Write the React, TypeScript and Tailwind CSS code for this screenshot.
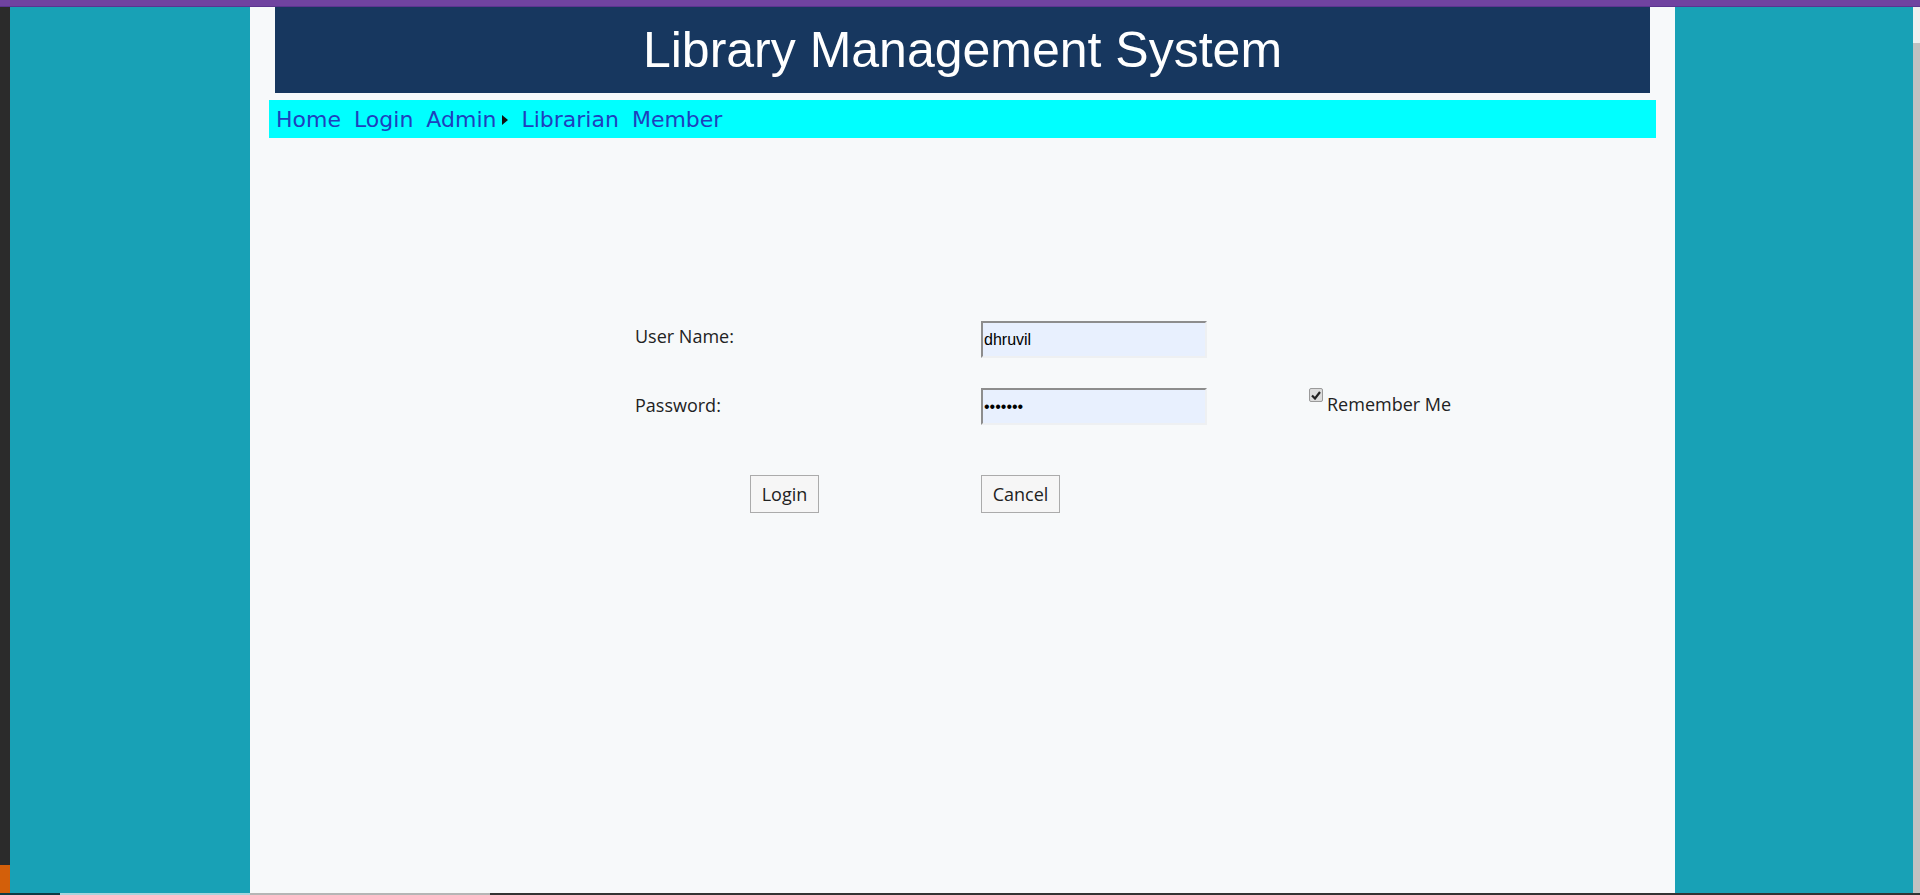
export default function App() {
  return (
    <div className="relative flex h-[895px] w-full flex-col overflow-hidden bg-[#2b2b2b] font-['Open_Sans',sans-serif]">
      {/* window title strip */}
      <div className="h-[7px] w-full shrink-0 border-b border-[#5b3590] bg-[#7043a0]" />

      <div className="flex min-h-0 flex-1">
        {/* left dark edge */}
        <div className="flex w-[10px] shrink-0 flex-col justify-end bg-[#2b2b2b]">
          <div className="h-[28px] w-full bg-[#d35f0a]" />
        </div>

        {/* left margin */}
        <div className="w-[240px] shrink-0 bg-[#18a1b6]" />

        {/* page */}
        <div className="flex w-[1425px] shrink-0 flex-col bg-[#f7f9fa]">
          <header className="mx-[25px] flex h-[86px] items-center justify-center bg-[#17375f]">
            <h1 className="font-['Liberation_Sans',Arial,sans-serif] text-[50px] leading-none text-white">
              Library Management System
            </h1>
          </header>

          <nav className="mx-[19px] mt-[7px] flex h-[38px] items-center gap-[13px] bg-[#00ffff] pl-[7px] font-['DejaVu_Sans',Verdana,sans-serif] text-[22px] text-[#1f3fbd]">
            <a>Home</a>
            <a>Login</a>
            <a className="flex items-center gap-[6px]">
              Admin
              <svg width="6" height="10" viewBox="0 0 6 10" className="mt-[1px]">
                <path d="M0 0 L6 5 L0 10 Z" fill="#111" />
              </svg>
            </a>
            <a>Librarian</a>
            <a>Member</a>
          </nav>

          <form className="ml-[385px] mt-[183px] grid grid-cols-[346px_328px_200px] text-[18px] text-[#222]">
            <label className="flex h-[37px] items-center pb-[7px]">User Name:</label>
            <div>
              <input
                readOnly
                value="dhruvil"
                className="h-[37px] w-[226px] border-[2px] border-b-[#eef0f2] border-l-[#8d8d8d] border-r-[#eef0f2] border-t-[#8d8d8d] bg-[#e8f0fe] pl-[1px] font-['Liberation_Sans',Arial,sans-serif] text-[16px] text-black outline-none"
              />
            </div>
            <div />

            <label className="mt-[30px] flex h-[37px] items-center pb-[2px]">Password:</label>
            <div className="mt-[30px]">
              <input
                readOnly
                value="•••••••"
                className="h-[37px] w-[226px] border-[2px] border-b-[#eef0f2] border-l-[#8d8d8d] border-r-[#eef0f2] border-t-[#8d8d8d] bg-[#e8f0fe] pl-[1px] font-['Liberation_Sans',Arial,sans-serif] text-[16px] text-black outline-none"
              />
            </div>
            <div className="mt-[30px] flex items-start">
              <span className="flex h-[14px] w-[14px] items-center justify-center rounded-[2px] border border-[#9a9a9a] bg-[#dcdcdc]">
                <svg width="10" height="9" viewBox="0 0 10 9">
                  <path d="M1 4.5 L4 7.5 L9 1" fill="none" stroke="#222" strokeWidth="2.2" />
                </svg>
              </span>
              <span className="ml-[4px] mt-[3px] leading-[26px]">Remember Me</span>
            </div>

            <div className="mt-[50px] pl-[115px]">
              <button
                type="button"
                className="h-[38px] w-[69px] border border-[#ababab] bg-[#f6f6f6] text-[18px] text-[#222]"
              >
                Login
              </button>
            </div>
            <div className="mt-[50px]">
              <button
                type="button"
                className="h-[38px] w-[79px] border border-[#ababab] bg-[#f6f6f6] text-[18px] text-[#222]"
              >
                Cancel
              </button>
            </div>
            <div />
          </form>
        </div>

        {/* right margin */}
        <div className="w-[238px] shrink-0 bg-[#18a1b6]" />

        {/* scrollbar */}
        <div className="flex w-[7px] shrink-0 flex-col bg-[#f0f0f0]">
          <div className="mt-[36px] flex-1 bg-[#c1c1c1]" />
        </div>
      </div>

      {/* bottom edge */}
      <div className="flex h-[2px] w-full shrink-0">
        <div className="w-[60px] bg-[#0d3b44]" />
        <div className="w-[190px] bg-[#a8d4dc]" />
        <div className="w-[240px] bg-[#b5b5b5]" />
        <div className="flex-1 bg-[#333]" />
      </div>
    </div>
  )
}
